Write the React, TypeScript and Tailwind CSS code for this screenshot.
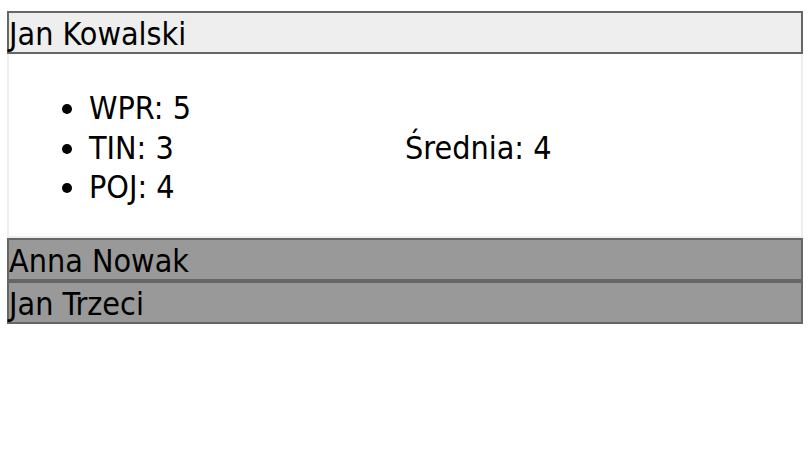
import React from 'react';

const students = [
  { name: 'Jan Kowalski', grades: [['WPR', 5], ['TIN', 3], ['POJ', 4]] as [string, number][], open: true },
  { name: 'Anna Nowak', grades: [] as [string, number][], open: false },
  { name: 'Jan Trzeci', grades: [] as [string, number][], open: false },
];

const App = () => {
  return (
    <div
      className="ml-[7px] mt-[11px] w-[796px] text-[32px] leading-[39px] text-black"
      style={{ fontFamily: '"DejaVu Sans Condensed", "DejaVu Sans", sans-serif' }}
    >
      {students.map((s) => {
        const avg = s.grades.length
          ? Math.round(s.grades.reduce((a, [, g]) => a + g, 0) / s.grades.length)
          : 0;
        return (
          <div key={s.name}>
            <div
              className={
                s.open
                  ? 'border-2 border-[#666666] bg-[#eeeeee] pt-[3px] leading-[36px]'
                  : 'border-2 border-[#666666] bg-[#999999] pt-[3px] leading-[36px]'
              }
            >
              {s.name}
            </div>
            {s.open && (
              <div className="flex border-2 border-t-0 border-[#eeeeee] bg-white">
                <ul className="mt-[35px] mb-[28px] w-1/2 list-disc pl-[80px]">
                  {s.grades.map(([subject, grade]) => (
                    <li key={subject} className="leading-[39.5px]">
                      {subject}: {grade}
                    </li>
                  ))}
                </ul>
                <div className="w-1/2 pt-[75px] leading-[39px]">Średnia: {avg}</div>
              </div>
            )}
          </div>
        );
      })}
    </div>
  );
};

export default App;
